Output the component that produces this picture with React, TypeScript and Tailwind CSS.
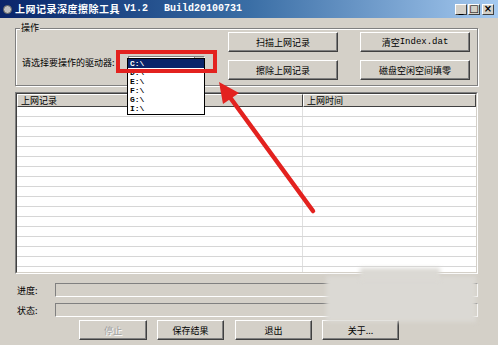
import React from "react";

const cjk = { fontFamily: '"SimSun","Noto Sans CJK SC","DejaVu Sans",sans-serif' };
const mono = { fontFamily: '"Liberation Mono","DejaVu Sans Mono",monospace' };

function Btn({ children, w, disabled }: { children: React.ReactNode; w: string; disabled?: boolean }) {
  return (
    <div
      className={`${w} h-[20px] flex items-center justify-center border border-t-white border-l-white border-r-[#404040] border-b-[#404040] shadow-[inset_-1px_-1px_0_#808080] bg-[#d4d0c8] text-[9px] leading-none ${
        disabled ? "text-[#a0a0a0] [text-shadow:1px_1px_0_#fff]" : "text-black"
      }`}
      style={cjk}
    >
      {children}
    </div>
  );
}

export default function App() {
  const drives = ["C:\\", "D:\\", "E:\\", "F:\\", "G:\\", "I:\\"];
  const rows = Array.from({ length: 17 });
  return (
    <div className="relative w-[498px] h-[345px] overflow-hidden bg-[#d4d0c8] flex flex-col">
      {/* Title bar */}
      <div className="h-[18px] flex items-center bg-gradient-to-r from-[#0a246a] via-[#3a6ea5] to-[#a6caf0] pl-[3px] pr-[3px]">
        <div className="w-[9px] h-[9px] rounded-full bg-[#c0c0c0] border border-[#606060] mr-[3px]" />
        <span className="text-white font-bold text-[10px] leading-none tracking-[0.5px]" style={cjk}>
          上网记录深度擦除工具
        </span>
        <span className="text-white font-bold text-[10px] leading-none ml-[4px]" style={mono}>
          V1.2
        </span>
        <span className="text-white font-bold text-[10px] leading-none ml-[16px]" style={mono}>
          Build20100731
        </span>
        <div className="ml-auto flex gap-[1px] mr-[1px]">
          {["_", "□", "×"].map((c, i) => (
            <div
              key={i}
              className={`w-[12px] h-[11px] ${i === 2 ? "ml-[1px]" : ""} flex items-center justify-center bg-[#d4d0c8] border border-t-white border-l-white border-r-[#404040] border-b-[#404040] text-black text-[10px] font-bold leading-none`}
              style={{ fontFamily: '"DejaVu Sans",sans-serif' }}
            >
              {c}
            </div>
          ))}
        </div>
      </div>

      {/* Group box */}
      <div className="relative mt-[10px] ml-[15px] w-[463px] h-[58px] border border-[#808080] shadow-[1px_1px_0_#fff,inset_1px_1px_0_#fff]">
        <span className="absolute -top-[7px] left-[4px] px-[1px] bg-[#d4d0c8] text-[9px] leading-[12px] text-black" style={cjk}>
          操作
        </span>
        <div className="flex pl-[6px] pt-[3px]">
          <div className="w-[206px] pt-[12px] flex items-center">
            <span className="text-[9px] leading-[13px] text-black whitespace-nowrap" style={cjk}>
              请选择要操作的驱动器:
            </span>
            <div className="ml-auto mr-[23px] w-[77px] h-[13px] bg-white border border-t-[#808080] border-l-[#808080] border-r-white border-b-white flex justify-end">
              <div className="w-[10px] h-[6px] bg-[#d4d0c8] border-l border-b border-[#808080]" />
            </div>
          </div>
          <div className="w-[110px] flex flex-col gap-[8px]">
            <Btn w="w-[110px]">扫描上网记录</Btn>
            <Btn w="w-[110px]">擦除上网记录</Btn>
          </div>
          <div className="w-[110px] ml-[22px] flex flex-col gap-[8px]">
            <Btn w="w-[110px]">
              清空<span style={mono}>Index.dat</span>
            </Btn>
            <Btn w="w-[110px]">磁盘空闲空间填零</Btn>
          </div>
        </div>
      </div>

      {/* List view */}
      <div className="mt-[6px] ml-[15px] w-[463px] h-[182px] border border-t-[#808080] border-l-[#808080] border-r-white border-b-white">
        <div className="w-full h-full border border-t-[#404040] border-l-[#404040] border-r-[#d4d0c8] border-b-[#d4d0c8] bg-white flex flex-col overflow-hidden">
          <div className="h-[13px] flex shrink-0">
            <div className="w-[286px] h-full bg-[#d4d0c8] border border-t-white border-l-white border-r-[#404040] border-b-[#404040] flex items-center pl-[3px] text-[9px] leading-none text-black" style={cjk}>
              上网记录
            </div>
            <div className="flex-1 h-full bg-[#d4d0c8] border border-t-white border-l-white border-r-[#404040] border-b-[#404040] flex items-center pl-[3px] text-[9px] leading-none text-black" style={cjk}>
              上网时间
            </div>
          </div>
          {rows.map((_, i) => (
            <div key={i} className="h-[10px] shrink-0 flex border-b border-[#d6d6d6]">
              <div className="w-[286px] border-r border-[#e0e0e0]" />
              <div className="flex-1" />
            </div>
          ))}
        </div>
      </div>

      {/* Progress & status */}
      <div className="mt-[9px] ml-[15px] flex items-center h-[14px]">
        <span className="w-[40px] pl-[2px] text-[9px] leading-none text-black" style={cjk}>
          进度:
        </span>
        <div className="w-[423px] h-[14px] border border-t-[#808080] border-l-[#808080] border-r-white border-b-white" />
      </div>
      <div className="mt-[6px] ml-[15px] flex items-center h-[14px]">
        <span className="w-[40px] pl-[2px] text-[9px] leading-none text-black" style={cjk}>
          状态:
        </span>
        <div className="w-[423px] h-[14px] border border-t-[#808080] border-l-[#808080] border-r-white border-b-white" />
      </div>

      {/* Bottom buttons */}
      <div className="mt-[3px] ml-[79px] flex">
        <Btn w="w-[68px]" disabled>
          停止
        </Btn>
        <div className="ml-[10px]">
          <Btn w="w-[67px]">保存结果</Btn>
        </div>
        <div className="ml-[11px]">
          <Btn w="w-[77px]">退出</Btn>
        </div>
        <div className="ml-[10px]">
          <Btn w="w-[77px]">关于...</Btn>
        </div>
      </div>

      {/* Watermark smudge */}
      <div className="absolute left-[326px] top-[276px] w-[150px] h-[46px] bg-[#dbd9d4] blur-[2px]" />
      <div className="absolute left-[360px] top-[268px] w-[80px] h-[12px] bg-[#dbd9d4] blur-[2px]" />

      {/* Dropdown list */}
      <div className="absolute left-[127px] top-[58px] w-[78px] h-[57px] bg-white border border-black flex flex-col">
        {drives.map((d, i) => (
          <div
            key={d}
            className={`h-[9px] flex items-center pl-[2px] text-[8px] font-bold leading-none ${
              i === 0 ? "bg-[#0a246a] text-white" : "text-black"
            }`}
            style={mono}
          >
            {d}
          </div>
        ))}
      </div>

      {/* Red annotation box */}
      <div className="absolute left-[116px] top-[50px] w-[101px] h-[23px] border-[4px] border-[#e3221f]" />

      {/* Red arrow */}
      <svg className="absolute left-0 top-0" width="498" height="345" viewBox="0 0 498 345">
        <line x1="313" y1="211" x2="229" y2="96" stroke="#e3221f" strokeWidth="4.5" strokeLinecap="round" />
        <polygon points="219,82 239,93 223,104" fill="#e3221f" />
      </svg>
    </div>
  );
}
